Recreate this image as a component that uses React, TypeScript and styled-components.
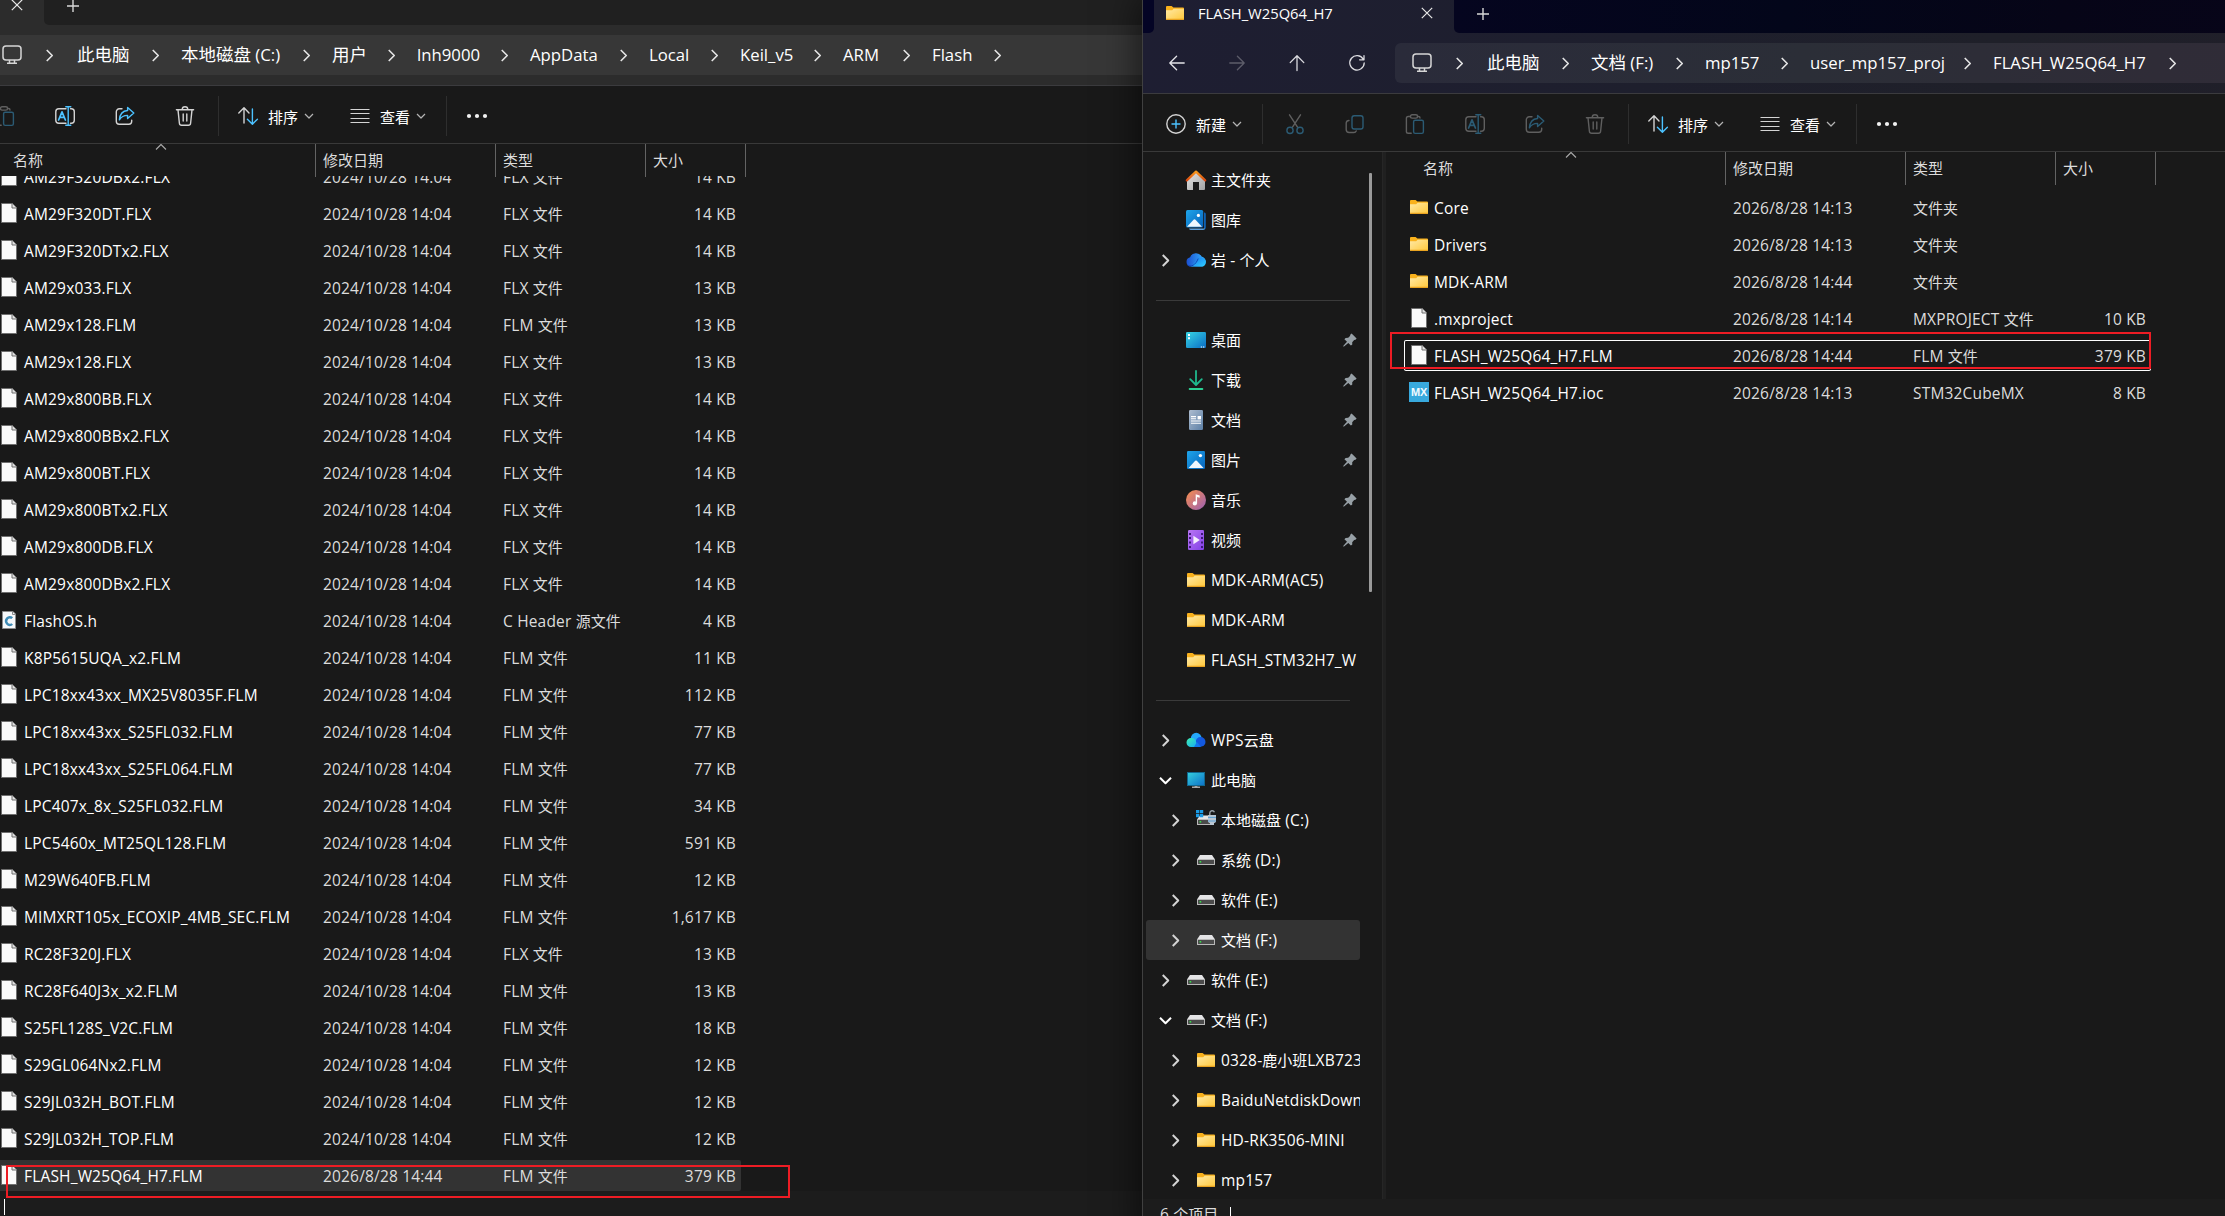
import React from "react";
import styled, { createGlobalStyle, css } from "styled-components";

const GlobalStyle = createGlobalStyle`
  html, body { margin: 0; padding: 0; background: #191919; overflow: hidden; }
  * { box-sizing: border-box; }
`;

/* ---------- text ---------- */

const Latin = styled.span<{ $scale: number; $track: number }>`
  font-size: ${(p) => p.$scale}em;
  letter-spacing: ${(p) => p.$track}px;
`;

const Label = styled.span<{ $size: number; $color: string }>`
  font-family: "Open Sans", "Noto Sans CJK SC", sans-serif;
  font-size: ${(p) => p.$size}px;
  font-weight: 400;
  color: ${(p) => p.$color};
  white-space: pre;
`;

type TxtProps = { children: string; size?: number; color?: string; scale?: number; track?: number };

function Txt({ children, size = 15, color = "#ffffff", scale = 1.033, track = 0.18 }: TxtProps) {
  const parts = children.split(/([\u2e80-\u9fff]+)/).filter(Boolean);
  return (
    <Label $size={size} $color={color}>
      {parts.map((part, i) =>
        /[\u2e80-\u9fff]/.test(part) ? part : <Latin key={i} $scale={scale} $track={track}>{part}</Latin>
      )}
    </Label>
  );
}

/* ---------- icons ---------- */

const Svg = styled.svg`
  display: block;
  flex: none;
  overflow: visible;
`;

const FolderIcon = () => (
  <Svg width="20" height="20" viewBox="0 0 20 20">
    <defs>
      <linearGradient id="fold" x1="0" y1="0" x2="1" y2="1">
        <stop offset="0" stopColor="#ffe9a6" />
        <stop offset="1" stopColor="#ffc83a" />
      </linearGradient>
    </defs>
    <path d="M1 4a1 1 0 0 1 1-1h4.6l1.800 1.600H18a1 1 0 0 1 1 1V15H1z" fill="#f9b11c" />
    <path d="M1 7.200h6.200l1.400-1.500H19V16a1 1 0 0 1-1 1H2a1 1 0 0 1-1-1z" fill="url(#fold)" />
    <path d="M1 15.800h18V16a1 1 0 0 1-1 1H2a1 1 0 0 1-1-1z" fill="#e9a320" />
  </Svg>
);

const FileIcon = () => (
  <Svg width="20" height="20" viewBox="0 0 20 20">
    <path d="M2.500.5h10.700l4.300 4.300v14.700h-15z" fill="#fafafa" stroke="#6f6f6f" />
    <path d="M13 .5v4.500h4.500" fill="#e2e2e2" stroke="#6f6f6f" />
  </Svg>
);

const HeaderFileIcon = () => (
  <Svg width="20" height="20" viewBox="0 0 20 20">
    <path d="M3.500 1.500h10.500l2.500 2.500v14.500h-13z" fill="#f6f8fa" stroke="#8c8c8c" />
    <path d="M13.500 1.500v3h3" fill="none" stroke="#8c8c8c" />
    <path d="M13.200 8.200a3.600 3.900 0 1 0 0 5.800" fill="none" stroke="#3f8bb5" strokeWidth="2.400" />
  </Svg>
);

const MxBadge = styled.span`
  width: 20px;
  height: 20px;
  background: #38a9dd;
  color: #f3fbff;
  font: 700 11px/21px "Liberation Sans", Arial, sans-serif;
  letter-spacing: -0.3px;
  text-align: center;
  flex: none;
  display: block;
`;

const HomeIcon = () => (
  <Svg width="20" height="20" viewBox="0 0 20 20">
    <defs>
      <linearGradient id="hw" x1="0" y1="0" x2="1" y2="1">
        <stop offset="0" stopColor="#e6e6e6" />
        <stop offset="1" stopColor="#a2a2a2" />
      </linearGradient>
      <linearGradient id="hr" x1="0" y1="0" x2="0" y2="1">
        <stop offset="0" stopColor="#f99a1c" />
        <stop offset="1" stopColor="#d9480f" />
      </linearGradient>
    </defs>
    <path d="M1 9.500L10 2l9 7.500V19a1 1 0 0 1-1 1h-5v-8H7v8H2a1 1 0 0 1-1-1z" fill="url(#hw)" />
    <path d="M.8 10.400L10 1.600l9.200 8.800" fill="none" stroke="url(#hr)" strokeWidth="2.200" strokeLinecap="round" strokeLinejoin="round" />
  </Svg>
);

const PicDefs = () => (
  <defs>
    <linearGradient id="pic" x1="0" y1="0" x2="1" y2="1">
      <stop offset="0" stopColor="#1ea5ea" />
      <stop offset="1" stopColor="#0763bb" />
    </linearGradient>
  </defs>
);

const GalleryIcon = () => (
  <Svg width="20" height="20" viewBox="0 0 20 20">
    <PicDefs />
    <path d="M18 2.500a1.500 1.500 0 0 1 1.800 1.500v13.500a2.300 2.300 0 0 1-1.800 2.200z" fill="#0e62b4" />
    <path d="M3 18.400h16a2 2 0 0 1-1.800 1.500H5a2 2 0 0 1-2-1.500z" fill="#5d9fdb" />
    <rect x="0" y="0" width="17.200" height="17.600" rx="1.500" fill="url(#pic)" />
    <path d="M1 16.800L7.800 9.600a1 1 0 0 1 1.400 0L16 16.800z" fill="#eef6fd" />
    <circle cx="12.400" cy="5.400" r="1.600" fill="#fff" />
  </Svg>
);

const PicturesIcon = () => (
  <Svg width="20" height="20" viewBox="0 0 20 20">
    <PicDefs />
    <rect x="1" y="1" width="18" height="18" rx="1.200" fill="url(#pic)" />
    <path d="M2.600 18L9.200 10.800a1.100 1.100 0 0 1 1.600 0L17.600 18z" fill="#eef6fd" />
    <circle cx="14.400" cy="5.600" r="1.700" fill="#fff" />
  </Svg>
);

const OneDriveIcon = () => (
  <Svg width="20" height="20" viewBox="0 0 20 20">
    <defs>
      <linearGradient id="od1" x1="0" y1="0" x2="1" y2="0">
        <stop offset="0" stopColor="#1a4fd0" />
        <stop offset="1" stopColor="#36b4ff" />
      </linearGradient>
      <linearGradient id="od2" x1="0" y1="0" x2="1" y2="1">
        <stop offset="0" stopColor="#1673f0" />
        <stop offset="1" stopColor="#2fd0ff" />
      </linearGradient>
    </defs>
    <path d="M4.700 16.600a4.800 4.800 0 0 1-.6-9.400A6.300 6.300 0 0 1 15.600 6.600a5.200 5.200 0 0 1 .2 10z" fill="url(#od1)" />
    <path d="M5 16.600L12.600 8.200a5.200 5.200 0 0 1 5-.2 4.600 4.600 0 0 1-2.400 8.600z" fill="url(#od2)" />
    <path d="M1.600 15c3 2.400 8 .4 10.600-6.400" fill="none" stroke="#1243b8" strokeWidth="1" />
  </Svg>
);

const WpsIcon = () => (
  <Svg width="20" height="20" viewBox="0 0 20 20">
    <defs>
      <linearGradient id="wp" x1="0" y1="0" x2="1" y2="1">
        <stop offset="0" stopColor="#3ff0b0" />
        <stop offset="1" stopColor="#13a8f8" />
      </linearGradient>
    </defs>
    <circle cx="10.200" cy="8.200" r="5.400" fill="#25a8fb" />
    <circle cx="14.600" cy="11.900" r="4.900" fill="#1359e0" />
    <path d="M5 8a4.600 4.600 0 0 1 5.200 4.200L12 17H5a4.500 4.500 0 0 1 0-9z" fill="url(#wp)" />
    <path d="M8 17h7l-4-5z" fill="#1177ee" />
  </Svg>
);

const DesktopIcon = () => (
  <Svg width="20" height="20" viewBox="0 0 20 20">
    <defs>
      <linearGradient id="dk" x1="0" y1="0" x2="1" y2="1">
        <stop offset="0" stopColor="#37d5e4" />
        <stop offset="1" stopColor="#0a6cc4" />
      </linearGradient>
    </defs>
    <rect x="0" y="2" width="20" height="16" rx="1.200" fill="url(#dk)" />
    <path d="M2 4h2v2H2zM2 7.200h2v2H2z" fill="#fff" />
    <path d="M14.800 16.400h1.300v1.200h-1.300zM17 16.400h1.300v1.200H17z" fill="#fff" />
  </Svg>
);

const DownloadIcon = () => (
  <Svg width="20" height="20" viewBox="0 0 20 20">
    <g fill="none" stroke="#1fb98d" strokeWidth="1.800" strokeLinecap="round" strokeLinejoin="round">
      <path d="M10 1v13.400M4.200 9.200L10 15l5.800-5.800" />
      <path d="M3.600 19h12.800" stroke="#2cd094" />
    </g>
  </Svg>
);

const DocumentsIcon = () => (
  <Svg width="20" height="20" viewBox="0 0 20 20">
    <defs>
      <linearGradient id="doc" x1="0" y1="0" x2="1" y2="1">
        <stop offset="0" stopColor="#aebdd0" />
        <stop offset="1" stopColor="#5c7fa6" />
      </linearGradient>
    </defs>
    <rect x="3" y="0" width="14" height="20" rx="1.200" fill="url(#doc)" />
    <path d="M5 6.600h5M5 8.800h5M5 11h10M5 13.200h10" stroke="#fff" strokeWidth="1.100" />
    <path d="M11.600 6h3.400v3.400h-3.400z" fill="#fff" />
  </Svg>
);

const MusicIcon = () => (
  <Svg width="20" height="20" viewBox="0 0 20 20">
    <defs>
      <linearGradient id="mus" x1="0" y1="0" x2="1" y2="1">
        <stop offset="0.1" stopColor="#f08a55" />
        <stop offset="1" stopColor="#9a5fb5" />
      </linearGradient>
    </defs>
    <circle cx="10" cy="10" r="10" fill="url(#mus)" />
    <circle cx="8.800" cy="13.400" r="2.100" fill="#fff" />
    <path d="M9.700 4.200l4 1.200v2.300l-2.600-.7v6.400H9.700z" fill="#fff" />
  </Svg>
);

const VideoIcon = () => (
  <Svg width="20" height="20" viewBox="0 0 20 20">
    <defs>
      <linearGradient id="vid" x1="0" y1="0" x2="1" y2="1">
        <stop offset="0" stopColor="#b976f4" />
        <stop offset="1" stopColor="#8240e6" />
      </linearGradient>
    </defs>
    <rect x="2" y="0" width="16" height="20" rx="1.200" fill="url(#vid)" />
    <path d="M3 3h2v2H3zM3 7h2v2H3zM3 11.500h2v2H3zM3 16h2v2H3zM15 3h2v2h-2zM15 7h2v2h-2zM15 11.500h2v2h-2zM15 16h2v2h-2z" fill="#3f1a78" />
    <path d="M7.400 5.800l6.400 4.200-6.400 4.200z" fill="#f4ecfd" />
  </Svg>
);

const ComputerIcon = () => (
  <Svg width="20" height="20" viewBox="0 0 20 20">
    <defs>
      <linearGradient id="pc" x1="0" y1="0" x2="1" y2="1">
        <stop offset="0" stopColor="#35d0dd" />
        <stop offset="1" stopColor="#0c6fc8" />
      </linearGradient>
    </defs>
    <rect x="1.500" y="2.500" width="17" height="13" fill="url(#pc)" stroke="#11678f" />
    <path d="M8.600 16h2.800v1.200h-2.800z" fill="#8d8d8d" />
    <path d="M6 17.200h8" stroke="#c9c9c9" strokeWidth="1.200" />
  </Svg>
);

const DriveIcon = () => (
  <Svg width="20" height="20" viewBox="0 0 20 20">
    <path d="M4 5h12l3 4.600H1z" fill="#e4e4e6" />
    <rect x="1.500" y="9.500" width="17" height="5" fill="#4b4b4b" stroke="#b9b9b9" />
    <rect x="3.600" y="11" width="1.600" height="1.600" fill="#38e04c" />
  </Svg>
);

const SystemDriveIcon = () => (
  <Svg width="20" height="20" viewBox="0 0 20 20">
    <path d="M4 5.400h12l3 4.200H1z" fill="#e4e4e6" />
    <rect x="1.500" y="9.500" width="14" height="5" fill="#4b4b4b" stroke="#b9b9b9" />
    <rect x="3.600" y="11" width="1.600" height="1.600" fill="#38e04c" />
    <path d="M0 0h3.300v3.300H0zM3.900 0h3.300v3.300H3.900zM0 3.900h3.300v3.300H0zM3.900 3.900h3.300v3.300H3.900z" fill="#1b9be6" />
    <path d="M13.800 5.500V3a2.400 2.400 0 0 1 4.600-.8" fill="none" stroke="#9aa3aa" strokeWidth="1.400" />
    <path d="M12 5h8v7l-2 1.200V15h-4v-1.800L12 12z" fill="#b9c6d2" />
    <path d="M12 7.400h8M12 11h8" stroke="#5ba0d4" strokeWidth="1" />
  </Svg>
);

const PinIcon = () => (
  <Svg width="14" height="14" viewBox="0 0 14 14">
    <path d="M8.600.4l5 5-1.100 1.400-1.300.2-2 2.200.1 2.200-1.400 1.200-2.600-2.600L1 13.400l-.8.2.2-.8L4 8.800 1.400 6.200l1.200-1.300 2.600-.1L7 2.900l.4-1.400z" fill="#97a0a6" />
  </Svg>
);

const chevronPaths = {
  right: "M2.500 0l5 5-5 5",
  down: "M0 2.500l5 5 5-5",
  up: "M0 7.500l5-5 5 5",
};

type ChevronProps = { size?: number; dir?: keyof typeof chevronPaths; color?: string; weight?: number };

const Chevron = ({ size = 10, dir = "right", color = "#e6e6e6", weight = 1.6 }: ChevronProps) => (
  <Svg width={size} height={size} viewBox="0 0 10 10">
    <path d={chevronPaths[dir]} fill="none" stroke={color} strokeWidth={weight * (10 / size)} strokeLinejoin="round" />
  </Svg>
);

const MonitorIcon = () => (
  <Svg width="20" height="20" viewBox="0 0 20 20" fill="none" stroke="#d6d6d6" strokeWidth="1.500">
    <rect x="1" y="1" width="18" height="14" rx="3" />
    <path d="M7.500 15v3M12.500 15v3M5 18.300h10" />
  </Svg>
);

const CloseIcon = () => (
  <Svg width="12" height="12" viewBox="0 0 12 12">
    <path d="M.8.8l10.400 10.400M11.200.8L.8 11.200" stroke="#e8e8e8" strokeWidth="1.200" />
  </Svg>
);

const PlusIcon = () => (
  <Svg width="12" height="12" viewBox="0 0 12 12">
    <path d="M6 0v12M0 6h12" stroke="#d8d8d8" strokeWidth="1.400" />
  </Svg>
);

const navStroke = { fill: "none", strokeWidth: 1.3, strokeLinecap: "round", strokeLinejoin: "round" } as const;

const BackIcon = () => (
  <Svg width="16" height="16" viewBox="0 0 16 16" {...navStroke} stroke="#e4e4e8">
    <path d="M15.200 8H1M7.600 1.200L.8 8l6.800 6.800" />
  </Svg>
);
const ForwardIcon = () => (
  <Svg width="16" height="16" viewBox="0 0 16 16" {...navStroke} stroke="#5d5d6a">
    <path d="M.8 8H15M8.400 1.200L15.200 8l-6.800 6.800" />
  </Svg>
);
const UpIcon = () => (
  <Svg width="16" height="16" viewBox="0 0 16 16" {...navStroke} stroke="#dcdce0">
    <path d="M8 15.500V1M1.200 7.600L8 .8l6.800 6.800" />
  </Svg>
);
const RefreshIcon = () => (
  <Svg width="16" height="16" viewBox="0 0 16 16" {...navStroke} stroke="#dcdce0">
    <path d="M14.200 4.200A7.200 7.200 0 1 0 15.200 8M15 .6v4.200h-4.400" />
  </Svg>
);

type Tone = { base: string; accent: string };
const ON: Tone = { base: "#d4d4d4", accent: "#4cc2ff" };
const OFF: Tone = { base: "#5f5f5f", accent: "#2b5b74" };

const Tool = ({ children, tone }: { children: React.ReactNode; tone: Tone }) => (
  <Svg width="20" height="20" viewBox="0 0 20 20" fill="none" stroke={tone.base} strokeWidth="1.400" strokeLinecap="round" strokeLinejoin="round">
    {children}
  </Svg>
);

const NewIcon = () => (
  <Tool tone={ON}>
    <circle cx="10" cy="10" r="9.200" />
    <path d="M10 6v8M6 10h8" stroke={ON.accent} />
  </Tool>
);
const CutIcon = () => (
  <Tool tone={OFF}>
    <path d="M4.500.8l8 12.400M15.500.8l-8 12.400" />
    <circle cx="5" cy="16.400" r="3.100" stroke={OFF.accent} />
    <circle cx="15" cy="16.400" r="3.100" stroke={OFF.accent} />
  </Tool>
);
const CopyIcon = () => (
  <Tool tone={OFF}>
    <path d="M4 6.500a2.800 2.800 0 0 0-2.800 2.500v6.500a3 3 0 0 0 3 3h4.600a2.500 2.500 0 0 0 2.400-1.500" />
    <rect x="7" y="1.800" width="11" height="13.200" rx="2.200" stroke={OFF.accent} />
  </Tool>
);
const PasteIcon = () => (
  <Tool tone={OFF}>
    <path d="M5.500 2.500H3.200A1.800 1.800 0 0 0 1.400 4.300v13.200a1.800 1.800 0 0 0 1.800 1.800h3M12.500 2.500h1a1.500 1.500 0 0 1 1.500 1.500" />
    <rect x="5.400" y=".7" width="7.200" height="3.400" rx="1.700" />
    <rect x="8.600" y="6.200" width="9.800" height="13.200" rx="1.600" stroke={OFF.accent} />
  </Tool>
);
const RenameIcon = ({ tone }: { tone: Tone }) => (
  <Tool tone={tone}>
    <path d="M11 2.700H3.800A3 3 0 0 0 .8 5.700v8.600a3 3 0 0 0 3 3H11M15.500 2.700h.8a3 3 0 0 1 3 3v8.600a3 3 0 0 1-3 3h-.8" />
    <path d="M3.600 14L7 5.800l3.400 8.200M4.700 11.400h4.600" stroke={tone.accent} strokeWidth="1.700" />
    <path d="M13.200.8v18.400M10.800.7h5M10.800 19.300h5" stroke={tone.accent} />
  </Tool>
);
const ShareIcon = ({ tone }: { tone: Tone }) => (
  <Tool tone={tone}>
    <path d="M7 2.800H4.200A2.900 2.900 0 0 0 1.300 5.700v9.600a2.900 2.900 0 0 0 2.900 2.900h9.600a2.900 2.900 0 0 0 2.900-2.900v-1" />
    <path d="M12.600 1.400L18.800 7l-6.200 5.600V9.400c-4 0-6.400 1.400-8.200 4.400.4-5.200 3.400-9 8.200-9.300z" stroke={tone.accent} />
  </Tool>
);
const TrashIcon = ({ tone }: { tone: Tone }) => (
  <Tool tone={tone}>
    <path d="M1.400 3.700h17.200M7.200 3.500a2.800 2.800 0 0 1 5.600 0M3 3.900l1.400 13.400a2.200 2.200 0 0 0 2.200 2h6.800a2.200 2.200 0 0 0 2.200-2L17 3.900M8.200 8v7M11.800 8v7" />
  </Tool>
);
const SortIcon = () => (
  <Tool tone={ON}>
    <path d="M6 17V2M.8 7L6 1.800 11 7" />
    <path d="M14.400 3v15M9.400 13.200l5 5 5-5" stroke={ON.accent} />
  </Tool>
);
const ViewIcon = () => (
  <Tool tone={ON}>
    <path d="M.5 3.500h19M.5 7.500h19M.5 12.500h19M.5 16.500h19" strokeLinecap="butt" strokeWidth="1.200" />
  </Tool>
);
const MoreIcon = () => (
  <Svg width="22" height="20" viewBox="0 0 22 20" fill="#f2f2f2">
    <circle cx="3" cy="10" r="2.100" />
    <circle cx="11" cy="10" r="2.100" />
    <circle cx="19" cy="10" r="2.100" />
  </Svg>
);

/* ---------- window frame ---------- */

const Screen = styled.div`
  position: relative;
  width: 2225px;
  height: 1216px;
  overflow: hidden;
  background: #191919;
`;

const Window = styled.section<{ $x: number; $y: number; $height: number }>`
  position: absolute;
  left: ${(p) => p.$x}px;
  top: ${(p) => p.$y}px;
  width: 1420px;
  height: ${(p) => p.$height}px;
  display: flex;
  flex-direction: column;
  overflow: hidden;
  background: #191919;
  border-left: 1px solid #404040;
  box-shadow: 0 0 34px 4px rgba(0, 0, 0, 0.55);
`;

const Chrome = styled.header<{ $bg: string }>`
  flex: none;
  background: ${(p) => p.$bg};
  border-bottom: 1px solid #3b3b3e;
`;

const TabStrip = styled.div`
  display: flex;
  height: 33px;
`;

const StripEdge = styled.div<{ $bg: string; $side: "left" | "right" }>`
  background: ${(p) => p.$bg};
  ${(p) =>
    p.$side === "left"
      ? css`width: 11px; border-bottom-right-radius: 5px;`
      : css`flex: 1; border-bottom-left-radius: 5px; padding: 8px 0 0 23px;`}
`;

const Tab = styled.div`
  width: 300px;
  height: 26px;
  display: flex;
  align-items: center;
  padding: 0 21px 0 11px;
`;

const TabTitle = styled.div`
  flex: 1;
  padding-left: 13px;
`;

const NavRow = styled.div`
  display: flex;
  height: 60px;
  align-items: center;
  padding-left: 4px;
`;

const NavButtons = styled.div`
  display: flex;
  width: 248px;
`;

const NavButton = styled.div`
  width: 60px;
  display: flex;
  justify-content: center;
`;

const AddressBar = styled.div<{ $bg: string }>`
  flex: 1;
  height: 40px;
  display: flex;
  align-items: center;
  background: ${(p) => p.$bg};
  border-radius: 6px 0 0 6px;
  padding-left: 17px;
`;

const CrumbGap = styled.div<{ $w: number }>`
  width: ${(p) => p.$w}px;
  display: flex;
  justify-content: center;
`;

const Crumb = styled.div<{ $w: number }>`
  width: ${(p) => p.$w}px;
  line-height: 40px;
`;

const CommandBar = styled.div`
  flex: none;
  display: flex;
  align-items: center;
  height: 58px;
  border-bottom: 1px solid #393939;
  padding: 3px 0 0 23px;
`;

const TextTool = styled.div<{ $w: number }>`
  width: ${(p) => p.$w}px;
  display: flex;
  align-items: center;
  gap: 10px;
`;

const DropSlot = styled.span`
  margin-left: -3px;
`;

const ToolSlot = styled.div<{ $w?: number }>`
  width: ${(p) => p.$w ?? 60}px;
  display: flex;
`;

const Blank = styled.div<{ $w: number }>`
  width: ${(p) => p.$w}px;
  flex: none;
`;

const ToolDivider = styled.div<{ $gap: number }>`
  width: 1px;
  height: 40px;
  background: #2e2e2e;
  margin-right: ${(p) => p.$gap}px;
`;

const Body = styled.div`
  flex: 1;
  min-height: 0;
  display: flex;
`;

const StatusBar = styled.footer`
  flex: none;
  height: 40px;
  background: #1c1c1c;
  display: flex;
  align-items: flex-start;
  padding: 4px 0 0 17px;
`;

const Caret = styled.div<{ $gap: number }>`
  width: 1px;
  height: 16px;
  background: #ffffff;
  margin: 4px 0 0 ${(p) => p.$gap}px;
`;

const StatusText = styled.div`
  width: 70px;
`;

/* ---------- sidebar ---------- */

const Sidebar = styled.nav`
  flex: none;
  display: flex;
  width: 239px;
  padding-left: 3px;
`;

const Tree = styled.div`
  width: 214px;
  overflow: hidden;
  padding-top: 8px;
`;

const TreeRow = styled.div<{ $depth: number; $active?: boolean }>`
  height: 40px;
  display: flex;
  align-items: center;
  padding-left: ${(p) => 9 + p.$depth * 10}px;
  padding-right: 3px;
  border-radius: 3px;
  background: ${(p) => (p.$active ? "#333333" : "transparent")};
`;

const Twisty = styled.div`
  width: 20px;
  display: flex;
  justify-content: center;
  flex: none;
`;

const TreeIcon = styled.div`
  margin: 0 5px 0 11px;
  flex: none;
`;

const TreeText = styled.div`
  flex: 1;
  padding-bottom: 1px;
`;

const TreeDivider = styled.div`
  height: 1px;
  margin: 20px 10px 19px;
  background: #3a3a3a;
`;

const ScrollThumb = styled.div`
  width: 3px;
  height: 419px;
  margin: 21px 0 0 9px;
  border-radius: 1px;
  background: #9a9a9a;
`;

const Splitter = styled.div`
  flex: none;
  width: 4px;
  background: #202020;
  border-left: 1px solid #262626;
`;

type Item = { icon: React.ReactNode; text: string; depth?: number; open?: boolean; fold?: boolean; pin?: boolean; active?: boolean };

const tree: (Item | null)[] = [
  { icon: <HomeIcon />, text: "主文件夹" },
  { icon: <GalleryIcon />, text: "图库" },
  { icon: <OneDriveIcon />, text: "岩 - 个人", fold: true },
  null,
  { icon: <DesktopIcon />, text: "桌面", pin: true },
  { icon: <DownloadIcon />, text: "下载", pin: true },
  { icon: <DocumentsIcon />, text: "文档", pin: true },
  { icon: <PicturesIcon />, text: "图片", pin: true },
  { icon: <MusicIcon />, text: "音乐", pin: true },
  { icon: <VideoIcon />, text: "视频", pin: true },
  { icon: <FolderIcon />, text: "MDK-ARM(AC5)" },
  { icon: <FolderIcon />, text: "MDK-ARM" },
  { icon: <FolderIcon />, text: "FLASH_STM32H7_W" },
  null,
  { icon: <WpsIcon />, text: "WPS云盘", fold: true },
  { icon: <ComputerIcon />, text: "此电脑", open: true },
  { icon: <SystemDriveIcon />, text: "本地磁盘 (C:)", depth: 1, fold: true },
  { icon: <DriveIcon />, text: "系统 (D:)", depth: 1, fold: true },
  { icon: <DriveIcon />, text: "软件 (E:)", depth: 1, fold: true },
  { icon: <DriveIcon />, text: "文档 (F:)", depth: 1, fold: true, active: true },
  { icon: <DriveIcon />, text: "软件 (E:)", fold: true },
  { icon: <DriveIcon />, text: "文档 (F:)", open: true },
  { icon: <FolderIcon />, text: "0328-鹿小班LXB723", depth: 1, fold: true },
  { icon: <FolderIcon />, text: "BaiduNetdiskDown", depth: 1, fold: true },
  { icon: <FolderIcon />, text: "HD-RK3506-MINI", depth: 1, fold: true },
  { icon: <FolderIcon />, text: "mp157", depth: 1, fold: true },
];

function SideTree() {
  return (
    <Sidebar>
      <Tree>
        {tree.map((it, i) =>
          it === null ? (
            <TreeDivider key={i} />
          ) : (
            <TreeRow key={i} $depth={it.depth ?? 0} $active={it.active}>
              <Twisty>
                {it.fold && <Chevron size={11} weight={2} color="#d4d4d4" />}
                {it.open && <Chevron size={11} dir="down" weight={2} color="#ffffff" />}
              </Twisty>
              <TreeIcon>{it.icon}</TreeIcon>
              <TreeText>
                <Txt>{it.text}</Txt>
              </TreeText>
              {it.pin && <PinIcon />}
            </TreeRow>
          )
        )}
      </Tree>
      <ScrollThumb />
    </Sidebar>
  );
}

/* ---------- file list ---------- */

const List = styled.main`
  flex: 1;
  min-width: 0;
  display: flex;
  flex-direction: column;
`;

const HeadRow = styled.div`
  flex: none;
  display: grid;
  grid-template-columns: 340px 180px 150px 100px;
  height: 32px;
`;

const HeadCell = styled.div<{ $pad: number }>`
  position: relative;
  border-right: 1px solid #636363;
  padding-left: ${(p) => p.$pad}px;
  line-height: 32px;
`;

const SortMark = styled.div`
  position: absolute;
  left: 180px;
  top: -2px;
`;

const Rows = styled.div<{ $shift: number }>`
  flex: 1;
  min-height: 0;
  overflow: hidden;
  padding-left: 18px;

  & > :first-child {
    margin-top: ${(p) => p.$shift}px;
  }
`;

const Row = styled.div<{ $state?: "selected" | "focused" }>`
  display: grid;
  grid-template-columns: 30px 299px 180px 120px 1fr;
  align-items: center;
  width: 747px;
  height: 31px;
  margin: 6px 0;
  padding-right: 5px;
  border-radius: 2px;
  background: ${(p) => (p.$state === "selected" ? "#333333" : "transparent")};
  box-shadow: ${(p) => (p.$state === "focused" ? "inset 0 0 0 1px #ffffff" : "none")};
`;

const RowIcon = styled.div`
  padding: 0 0 1px 5px;
`;

const Right = styled.div`
  text-align: right;
`;

type FileRow = { icon?: "folder" | "c" | "mx"; name: string; date: string; type: string; size: string; state?: "selected" | "focused" };

const OLD = "2024/10/28 14:04";
const f = (name: string, size: string): FileRow => ({ name, date: OLD, type: name.slice(-3) + " 文件", size });

const leftFiles: FileRow[] = [
  f("AM29F320DBx2.FLX", "14 KB"),
  f("AM29F320DT.FLX", "14 KB"),
  f("AM29F320DTx2.FLX", "14 KB"),
  f("AM29x033.FLX", "13 KB"),
  f("AM29x128.FLM", "13 KB"),
  f("AM29x128.FLX", "13 KB"),
  f("AM29x800BB.FLX", "14 KB"),
  f("AM29x800BBx2.FLX", "14 KB"),
  f("AM29x800BT.FLX", "14 KB"),
  f("AM29x800BTx2.FLX", "14 KB"),
  f("AM29x800DB.FLX", "14 KB"),
  f("AM29x800DBx2.FLX", "14 KB"),
  { icon: "c", name: "FlashOS.h", date: OLD, type: "C Header 源文件", size: "4 KB" },
  f("K8P5615UQA_x2.FLM", "11 KB"),
  f("LPC18xx43xx_MX25V8035F.FLM", "112 KB"),
  f("LPC18xx43xx_S25FL032.FLM", "77 KB"),
  f("LPC18xx43xx_S25FL064.FLM", "77 KB"),
  f("LPC407x_8x_S25FL032.FLM", "34 KB"),
  f("LPC5460x_MT25QL128.FLM", "591 KB"),
  f("M29W640FB.FLM", "12 KB"),
  f("MIMXRT105x_ECOXIP_4MB_SEC.FLM", "1,617 KB"),
  f("RC28F320J.FLX", "13 KB"),
  f("RC28F640J3x_x2.FLM", "13 KB"),
  f("S25FL128S_V2C.FLM", "18 KB"),
  f("S29GL064Nx2.FLM", "12 KB"),
  f("S29JL032H_BOT.FLM", "12 KB"),
  f("S29JL032H_TOP.FLM", "12 KB"),
  { name: "FLASH_W25Q64_H7.FLM", date: "2026/8/28 14:44", type: "FLM 文件", size: "379 KB", state: "selected" },
];

const rightFiles: FileRow[] = [
  { icon: "folder", name: "Core", date: "2026/8/28 14:13", type: "文件夹", size: "" },
  { icon: "folder", name: "Drivers", date: "2026/8/28 14:13", type: "文件夹", size: "" },
  { icon: "folder", name: "MDK-ARM", date: "2026/8/28 14:44", type: "文件夹", size: "" },
  { name: ".mxproject", date: "2026/8/28 14:14", type: "MXPROJECT 文件", size: "10 KB" },
  { name: "FLASH_W25Q64_H7.FLM", date: "2026/8/28 14:44", type: "FLM 文件", size: "379 KB", state: "focused" },
  { icon: "mx", name: "FLASH_W25Q64_H7.ioc", date: "2026/8/28 14:13", type: "STM32CubeMX", size: "8 KB" },
];

const iconFor = (kind?: FileRow["icon"]) =>
  kind === "folder" ? <FolderIcon /> : kind === "c" ? <HeaderFileIcon /> : kind === "mx" ? <MxBadge>MX</MxBadge> : <FileIcon />;

function FileList({ files, shift }: { files: FileRow[]; shift: number }) {
  const dim = "#dcdcdc";
  return (
    <List>
      <HeadRow>
        <HeadCell $pad={37}>
          <Txt color={dim}>名称</Txt>
          <SortMark>
            <Chevron dir="up" weight={1.1} color="#a8a8a8" />
          </SortMark>
        </HeadCell>
        <HeadCell $pad={7}><Txt color={dim}>修改日期</Txt></HeadCell>
        <HeadCell $pad={7}><Txt color={dim}>类型</Txt></HeadCell>
        <HeadCell $pad={7}><Txt color={dim}>大小</Txt></HeadCell>
      </HeadRow>
      <Rows $shift={shift}>
        {files.map((r) => (
          <Row key={r.name} $state={r.state}>
            <RowIcon>{iconFor(r.icon)}</RowIcon>
            <Txt>{r.name}</Txt>
            <Txt color={dim}>{r.date}</Txt>
            <Txt color={dim}>{r.type}</Txt>
            <Right><Txt color={dim}>{r.size}</Txt></Right>
          </Row>
        ))}
      </Rows>
    </List>
  );
}

/* ---------- explorer ---------- */

type Theme = { strip: string; edge: string; chrome: string; address: string };

const grey: Theme = { strip: "#202020", edge: "#202020", chrome: "#2c2c2c", address: "#373737" };
const navy: Theme = {
  edge: "#040425",
  strip: "linear-gradient(90deg, #05051f 0%, #03061a 30%, #060517 55%, #09041c 100%)",
  chrome: "linear-gradient(90deg, #1e1e32 0%, #1e1f2d 35%, #1f2029 60%, #211e2a 100%)",
  address: "linear-gradient(90deg, #2a2b3a 0%, #2b2e37 35%, #2f2c37 65%, #312c38 100%)",
};

const Crumbs = ({ items }: { items: [string, number][] }) => (
  <>
    <MonitorIcon />
    <CrumbGap $w={55}><Chevron size={11} /></CrumbGap>
    {items.map(([name, w]) => (
      <React.Fragment key={name}>
        <Crumb $w={w}><Txt size={17.5} scale={0.957} track={0}>{name}</Txt></Crumb>
        <CrumbGap $w={51}><Chevron size={11} /></CrumbGap>
      </React.Fragment>
    ))}
  </>
);

const DropMark = () => (
  <DropSlot>
    <Chevron size={8} dir="down" weight={1.2} color="#b4b4b4" />
  </DropSlot>
);

const Commands = ({ partial }: { partial?: boolean }) => {
  const tone = partial ? ON : OFF;
  return (
    <CommandBar>
      {partial ? (
        <Blank $w={239} />
      ) : (
        <>
          <TextTool $w={96}><NewIcon /><Txt>新建</Txt><DropMark /></TextTool>
          <ToolDivider $gap={22} />
          <ToolSlot><CutIcon /></ToolSlot>
          <ToolSlot><CopyIcon /></ToolSlot>
        </>
      )}
      <ToolSlot><PasteIcon /></ToolSlot>
      <ToolSlot><RenameIcon tone={tone} /></ToolSlot>
      <ToolSlot><ShareIcon tone={tone} /></ToolSlot>
      <ToolSlot $w={43}><TrashIcon tone={tone} /></ToolSlot>
      <ToolDivider $gap={19} />
      <TextTool $w={112}><SortIcon /><Txt>排序</Txt><DropMark /></TextTool>
      <TextTool $w={96}><ViewIcon /><Txt>查看</Txt><DropMark /></TextTool>
      <ToolDivider $gap={19} />
      <MoreIcon />
    </CommandBar>
  );
};

const MarkBox = styled.div<{ $x: number; $y: number; $w: number; $h: number }>`
  position: absolute;
  left: ${(p) => p.$x}px;
  top: ${(p) => p.$y}px;
  width: ${(p) => p.$w}px;
  height: ${(p) => p.$h}px;
  border: 2px solid #ed1c24;
`;

export default function App() {
  return (
    <Screen>
      <GlobalStyle />

      <Window $x={-268} $y={-8} $height={1239}>
        <Chrome $bg={grey.chrome}>
          <TabStrip>
            <StripEdge $bg={grey.edge} $side="left" />
            <Tab><TabTitle /><CloseIcon /></Tab>
            <StripEdge $bg={grey.strip} $side="right"><PlusIcon /></StripEdge>
          </TabStrip>
          <NavRow>
            <NavButtons />
            <AddressBar $bg={grey.address}>
              <Crumbs
                items={[["此电脑", 53], ["本地磁盘 (C:)", 100], ["用户", 34], ["lnh9000", 62], ["AppData", 68], ["Local", 40], ["Keil_v5", 52], ["ARM", 38], ["Flash", 40]]}
              />
            </AddressBar>
          </NavRow>
        </Chrome>
        <Commands partial />
        <Body>
          <Blank $w={243} />
          <FileList files={leftFiles} shift={-15} />
        </Body>
        <StatusBar><Caret $gap={254} /></StatusBar>
      </Window>

      <Window $x={1142} $y={0} $height={1239}>
        <Chrome $bg={navy.chrome}>
          <TabStrip>
            <StripEdge $bg={navy.edge} $side="left" />
            <Tab>
              <FolderIcon />
              <TabTitle><Txt scale={0.985} track={0}>FLASH_W25Q64_H7</Txt></TabTitle>
              <CloseIcon />
            </Tab>
            <StripEdge $bg={navy.strip} $side="right"><PlusIcon /></StripEdge>
          </TabStrip>
          <NavRow>
            <NavButtons>
              <NavButton><BackIcon /></NavButton>
              <NavButton><ForwardIcon /></NavButton>
              <NavButton><UpIcon /></NavButton>
              <NavButton><RefreshIcon /></NavButton>
            </NavButtons>
            <AddressBar $bg={navy.address}>
              <Crumbs items={[["此电脑", 53], ["文档 (F:)", 63], ["mp157", 54], ["user_mp157_proj", 132], ["FLASH_W25Q64_H7", 154]]} />
            </AddressBar>
          </NavRow>
        </Chrome>
        <Commands />
        <Body>
          <SideTree />
          <Splitter />
          <FileList files={rightFiles} shift={8} />
        </Body>
        <StatusBar>
          <StatusText><Txt color="#dcdcdc">6 个项目</Txt></StatusText>
          <Caret $gap={0} />
        </StatusBar>
      </Window>

      <MarkBox $x={6} $y={1165} $w={784} $h={33} />
      <MarkBox $x={1390} $y={332} $w={761} $h={37} />
    </Screen>
  );
}
